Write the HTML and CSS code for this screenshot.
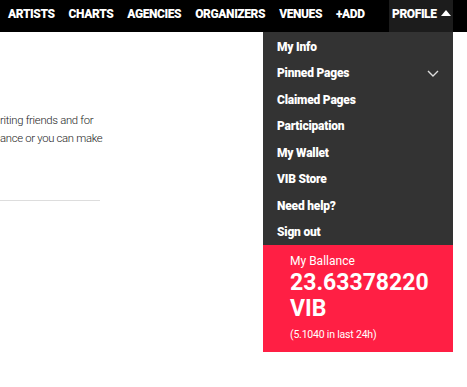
FILE: index.html
```html
<!DOCTYPE html>
<html>
<head>
<meta charset="utf-8">
<link rel="stylesheet" href="styles.css">
</head>
<body>
<nav class="topnav">
  <a class="nav-link">ARTISTS</a>
  <a class="nav-link">CHARTS</a>
  <a class="nav-link">AGENCIES</a>
  <a class="nav-link">ORGANIZERS</a>
  <a class="nav-link">VENUES</a>
  <a class="nav-link">+ADD</a>
  <div class="profile">
    <span>PROFILE</span>
    <svg class="caret-up" width="10" height="6" viewBox="0 0 10 6"><path d="M0 6 L5 0 L10 6 Z" fill="#fff"/></svg>
    <div class="dropdown">
      <ul class="menu">
        <li>My Info</li>
        <li class="has-sub">Pinned Pages
          <svg class="chev" width="12" height="7" viewBox="0 0 12 7"><path d="M1 1 L6 6 L11 1" fill="none" stroke="#ddd" stroke-width="1.4"/></svg>
        </li>
        <li>Claimed Pages</li>
        <li>Participation</li>
        <li>My Wallet</li>
        <li>VIB Store</li>
        <li>Need help?</li>
        <li>Sign out</li>
      </ul>
      <div class="balance">
        <div class="bal-label">My Ballance</div>
        <div class="bal-amount">23.63378220<br>VIB</div>
        <div class="bal-change">(5.1040 in last 24h)</div>
      </div>
    </div>
  </div>
</nav>
<main class="content">
  <p class="intro">riting friends and for<br>ance or you can make</p>
  <hr class="rule">
</main>
</body>
</html>
```
FILE: styles.css
```css
* { box-sizing: border-box; }
html, body { min-height: 387px; }
body {
  margin: 0;
  font-family: Roboto, "Noto Sans", sans-serif;
  background: #fff;
}
.topnav {
  height: 32px;
  background: #000;
  display: flex;
  align-items: stretch;
  padding-left: 8px;
  gap: 14px;
  position: relative;
  z-index: 2;
}
.nav-link {
  color: #fff;
  font-weight: 900;
  font-size: 12px;
  letter-spacing: -0.4px;
  line-height: 28px;
}
.profile {
  margin-left: auto;
  margin-right: 14px;
  width: 64px;
  background: #1c1c1c;
  color: #fff;
  font-weight: 900;
  font-size: 12px;
  letter-spacing: -0.4px;
  display: flex;
  align-items: flex-start;
  padding: 0 0 0 3px;
  gap: 4px;
  line-height: 28px;
  position: relative;
}
.caret-up { margin-top: 10px; }
.dropdown {
  position: absolute;
  top: 32px;
  right: 0;
  width: 190px;
  letter-spacing: -0.2px;
}
.menu {
  list-style: none;
  margin: 0;
  padding: 1px 0 0 14px;
  background: #333;
}
.menu li {
  height: 26.5px;
  line-height: 27px;
  font-size: 12px;
  font-weight: 900;
  color: #fff;
  display: flex;
  align-items: center;
  justify-content: space-between;
  padding-right: 14px;
  padding-top: 2px;
}
.balance {
  background: #ff1f44;
  color: #fff;
  padding: 9px 14px 10px 27px;
  height: 107px;
  letter-spacing: 0;
  font-weight: 400;
}
.bal-label { font-size: 12px; line-height: 14px; font-weight: 400; }
.bal-amount {
  font-size: 23px;
  font-weight: 700;
  line-height: 26px;
  margin-top: 2px;
}
.bal-change { font-size: 10.5px; line-height: 14px; margin-top: 6px; font-weight: 400; letter-spacing: -0.2px; }
.content { padding-top: 80px; }
.intro {
  margin: 0;
  font-size: 11.3px;
  font-weight: 300;
  line-height: 18px;
  color: #222;
  letter-spacing: -0.3px;
}
.rule {
  width: 100px;
  margin: 52px 0 0 0;
  border: 0;
  border-top: 1px solid #ddd;
}
```
